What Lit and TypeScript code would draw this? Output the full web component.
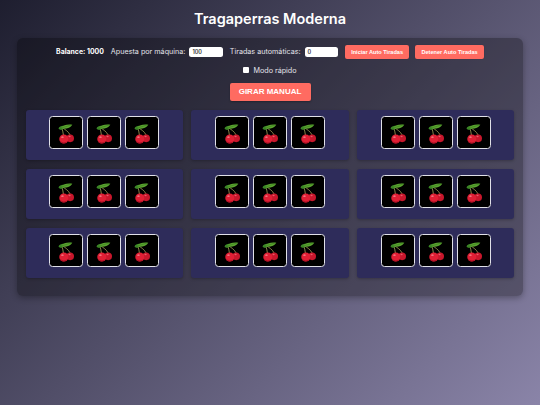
import { LitElement, html, css, svg } from "lit";
import { customElement } from "lit/decorators.js";

const cherry = svg`<svg class="cherry" viewBox="0 0 32 32" aria-hidden="true">
  <path d="M11.6 10.5 C12.6 13 13.4 15.4 13.6 18.4 M11.6 10.5 C15.4 12.4 18.6 14.8 20.4 18.2" fill="none" stroke="#b5ad62" stroke-width=".75"/>
  <path d="M8.6 11.6 C9.4 9.6 11.4 8.6 14 8.8 C14.8 10.4 13.8 12.6 11.6 13 C10.4 13.2 9.4 12.6 8.6 11.6Z" fill="#3d8a28"/>
  <path d="M11.4 10.6 C13.4 8 17.6 7.2 22.6 7.8 C21 10.4 17.4 12.2 13.4 12 C12.4 11.8 11.8 11.2 11.4 10.6Z" fill="#5ba52f"/>
  <path d="M10 11.6 C13.6 10.6 17.6 9.2 21.6 8" fill="none" stroke="#2c6a1c" stroke-width=".45"/>
  <circle cx="20.4" cy="21.6" r="3.9" fill="#c8172c"/>
  <circle cx="14" cy="22.2" r="4.6" fill="#e01f35"/>
  <path d="M9.8 23.8 C11 27.4 15.8 27.8 18.2 24.4 C16.4 26.2 12.6 26.6 9.8 23.8Z" fill="#a50f22"/>
  <ellipse cx="12.6" cy="20.4" rx="1.3" ry=".9" fill="#f2707a"/>
  <ellipse cx="19.8" cy="19.8" rx="1.1" ry=".7" fill="#ea5a68"/>
</svg>`;

@customElement("app-root")
export class AppRoot extends LitElement {
  static styles = css`
    :host {
      display: block;
      width: 540px;
      height: 405px;
      overflow: hidden;
      background: linear-gradient(135deg, #1e1e2f 0%, #8a84a8 100%);
      font-family: "Inter", "Liberation Sans", sans-serif;
      color: #fff;
      box-sizing: border-box;
    }
    h1 {
      margin: 0;
      height: 38px;
      display: flex;
      align-items: center;
      justify-content: center;
      font-size: 14.5px;
      font-weight: 600;
      padding-bottom: 1px;
      box-sizing: border-box;
    }
    .panel {
      margin: 0 17.3px;
      height: 258px;
      box-sizing: border-box;
      padding: 7px 8.3px 0;
      background: rgba(0, 0, 0, 0.3);
      border-radius: 6px;
      box-shadow: 0 2px 6px rgba(0, 0, 0, 0.3);
    }
    .controls {
      display: flex;
      justify-content: center;
      align-items: center;
      height: 14px;
      font-size: 7.2px;
      color: #e4e3ea;
    }
    .balance { font-weight: 700; font-size: 6.9px; color: #fff; margin-right: 7px; padding-bottom: 2px; }
    .label { margin-right: 4px; padding-bottom: 2px; }
    .num {
      width: 33.4px;
      height: 10.6px;
      background: #fff;
      border-radius: 2.5px;
      color: #333;
      font-size: 5.5px;
      font-weight: 600;
      padding-left: 3px;
      box-sizing: border-box;
      display: flex;
      align-items: center;
      margin-right: 7px;
    }
    .small-btn {
      height: 13.4px;
      padding: 0 6.2px;
      background: #ff6b61;
      border-radius: 2px;
      font: 700 5.6px "Liberation Sans", sans-serif;
      color: #fff;
      display: flex;
      align-items: center;
      box-shadow: 0 0 1px rgba(0,0,0,.3);
    }
    .small-btn + .small-btn { margin-left: 6px; }
    .fast {
      display: flex;
      justify-content: center;
      align-items: center;
      gap: 4px;
      margin-top: 4px;
      height: 14px;
      font-size: 7.2px;
      color: #e4e3ea;
    }
    .box { width: 6px; height: 6px; background: #fff; border-radius: 1px; }
    .spin-row { display: flex; justify-content: center; margin-top: 6px; }
    .spin {
      width: 81px;
      height: 17.5px;
      background: #ff6b61;
      border-radius: 2px;
      font: 700 8px "Liberation Sans", sans-serif;
      display: flex;
      align-items: center;
      justify-content: center;
      box-shadow: 0 1px 2px rgba(0,0,0,.3);
    }
    .grid {
      display: grid;
      grid-template-columns: repeat(3, 157.3px);
      grid-auto-rows: 50px;
      justify-content: space-between;
      row-gap: 9px;
      margin-top: 9px;
    }
    .machine {
      background: #2e2c5a;
      border-radius: 3px;
      display: flex;
      justify-content: center;
      align-items: flex-start;
      padding-top: 6px;
      box-sizing: border-box;
      gap: 4.4px;
      box-shadow: 0 1px 3px rgba(0,0,0,.25);
    }
    .slot {
      width: 33.6px;
      height: 33.6px;
      box-sizing: border-box;
      background: #000;
      border: 1px solid #e0e0e8;
      border-radius: 3.5px;
      display: flex;
      align-items: center;
      justify-content: center;
    }
    .cherry { width: 31.6px; height: 31.6px; display: block; flex: none; }
  `;

  render() {
    return html`
      <h1>Tragaperras Moderna</h1>
      <div class="panel">
        <div class="controls">
          <span class="balance">Balance: 1000</span>
          <span class="label">Apuesta por máquina:</span>
          <span class="num">100</span>
          <span class="label">Tiradas automáticas:</span>
          <span class="num">0</span>
          <span class="small-btn">Iniciar Auto Tiradas</span>
          <span class="small-btn">Detener Auto Tiradas</span>
        </div>
        <div class="fast"><span class="box"></span><span>Modo rápido</span></div>
        <div class="spin-row"><div class="spin">GIRAR MANUAL</div></div>
        <div class="grid">
          ${Array.from({ length: 9 }, () => html`
            <div class="machine">
              ${[0, 1, 2].map(() => html`<div class="slot">${cherry}</div>`)}
            </div>`)}
        </div>
      </div>
    `;
  }
}
